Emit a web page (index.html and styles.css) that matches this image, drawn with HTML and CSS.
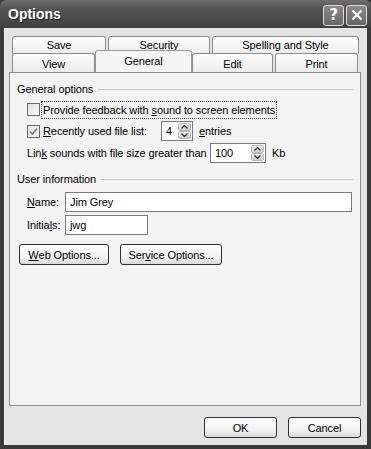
FILE: index.html
```html
<!DOCTYPE html>
<html lang="en">
<head>
	<meta charset="UTF-8">
	<title>Options</title>
	<link rel="stylesheet" href="styles.css">
</head>
<body>
	<div class="window">
		<div class="titlebar">
			<span class="title">Options</span>
			<div class="caption-btns">
				<span class="cap-btn">?</span>
				<span class="cap-btn">
					<svg width="12" height="12" viewBox="0 0 12 12"><path d="M1.5 1.5 L10.5 10.5 M10.5 1.5 L1.5 10.5" stroke="#fff" stroke-width="2.2"/></svg>
				</span>
			</div>
		</div>
		<div class="client">
			<div class="tabs tabs-back">
				<div class="tab w-save">Save</div>
				<div class="tab w-security">Security</div>
				<div class="tab w-spelling">Spelling and Style</div>
			</div>
			<div class="tabs tabs-front">
				<div class="tab w-view">View</div>
				<div class="tab tab-active w-general">General</div>
				<div class="tab w-edit">Edit</div>
				<div class="tab w-print">Print</div>
			</div>
			<div class="panel">
				<div class="group-head"><span>General options</span><i></i></div>
				<div class="row row-check1">
					<span class="check"></span>
					<span class="focus">Provide feedback with <u>s</u>ound to screen elements</span>
				</div>
				<div class="row row-check2">
					<span class="check checked">
						<svg width="9" height="9" viewBox="0 0 9 9"><path d="M1 4.5 L3.5 7 L8 1.5" fill="none" stroke="#777" stroke-width="1.6"/></svg>
					</span>
					<span class="lbl-recent"><u>R</u>ecently used file list:</span>
					<span class="spin spin-small"><span class="val">4</span><span class="arrows"><b><svg width="7" height="4" viewBox="0 0 7 4"><path d="M0.5 3.5 L3.5 0.5 L6.5 3.5" fill="none" stroke="#333" stroke-width="1.3"/></svg></b><b><svg width="7" height="4" viewBox="0 0 7 4"><path d="M0.5 0.5 L3.5 3.5 L6.5 0.5" fill="none" stroke="#333" stroke-width="1.3"/></svg></b></span></span>
					<span class="after"><u>e</u>ntries</span>
				</div>
				<div class="row row-link">
					<span class="lbl-link">Lin<u>k</u> sounds with file size greater than</span>
					<span class="spin spin-wide"><span class="val">100</span><span class="arrows"><b><svg width="7" height="4" viewBox="0 0 7 4"><path d="M0.5 3.5 L3.5 0.5 L6.5 3.5" fill="none" stroke="#333" stroke-width="1.3"/></svg></b><b><svg width="7" height="4" viewBox="0 0 7 4"><path d="M0.5 0.5 L3.5 3.5 L6.5 0.5" fill="none" stroke="#333" stroke-width="1.3"/></svg></b></span></span>
					<span class="after">Kb</span>
				</div>
				<div class="group-head head-user"><span>User information</span><i></i></div>
				<div class="row row-name">
					<span class="lbl"><u>N</u>ame:</span>
					<span class="field field-name">Jim Grey</span>
				</div>
				<div class="row row-init">
					<span class="lbl">Initia<u>l</u>s:</span>
					<span class="field field-init">jwg</span>
				</div>
				<div class="row row-btns">
					<span class="btn btn-web"><u>W</u>eb Options...</span>
					<span class="btn btn-service">Ser<u>v</u>ice Options...</span>
				</div>
			</div>
			<div class="footer">
				<span class="btn btn-ok">OK</span>
				<span class="btn btn-cancel">Cancel</span>
			</div>
		</div>
	</div>
</body>
</html>
```

FILE: styles.css
```css
*{padding:0;margin:0;box-sizing:border-box;}
body{
	background:#fff;
	font-family:"Liberation Sans",Arial,sans-serif;
	font-size:11px;
	letter-spacing:-0.1px;
	color:#000;
}
u{text-decoration:underline;text-underline-offset:1px;}

.window{
	width:371px;
	height:449px;
	background:#3a3a3a;
	display:flex;
	flex-direction:column;
}
.titlebar{
	height:28px;
	display:flex;
	align-items:center;
	justify-content:space-between;
	padding:0 4px 0 8px;
	background:linear-gradient(#6e6e6e,#555 30%,#4a4a4a 70%,#3e3e3e);
	border-radius:6px 6px 0 0;
}
.title{
	color:#fff;
	font-weight:bold;
	font-size:14px;
	letter-spacing:0;
	text-shadow:1px 1px 0 #222;
}
.caption-btns{display:flex;gap:2px;margin-top:2px;}
.cap-btn{
	width:21px;
	height:21px;
	border:1px solid #ddd;
	border-radius:3px;
	background:linear-gradient(#8a8a8a,#666);
	color:#fff;
	font-family:"DejaVu Sans",sans-serif;
	font-weight:bold;
	font-size:15px;
	display:flex;
	align-items:center;
	justify-content:center;
}

.client{
	flex:1;
	margin:0 4px 4px 4px;
	background:#e4e4e4;
	border-left:1px solid #f4f4f4;
	padding:8px 0 0 4px;
}
.tabs{display:flex;}
.tabs-back{margin-left:3px;gap:2px;height:17px;}
.tabs-front{margin-left:3px;height:19px;}
.tab{
	height:19px;
	border:1px solid #8c8c8c;
	border-bottom:none;
	border-radius:3px 3px 0 0;
	background:linear-gradient(#fdfdfd,#ececec);
	text-align:center;
	line-height:20px;
	white-space:nowrap;
}
.tabs-back .tab{height:18px;line-height:16px;}
.w-save{width:94px;}
.w-security{width:102px;}
.w-spelling{width:147px;}
.w-view{width:83px;}
.w-general{width:97px;}
.w-edit{width:81px;margin-right:2px;}
.w-print{width:83px;}
.tab-active{
	height:22px;
	margin-top:-3px;
	background:#f5f5f5;
	border-color:#999;
	position:relative;
	z-index:1;
	line-height:21px;
}

.panel{
	width:352px;
	height:334px;
	border:1px solid #8e8e8e;
	background:#f3f3f3;
	padding:9px 7px 0 7px;
}
.group-head{
	display:flex;
	align-items:center;
	height:14px;
	white-space:nowrap;
}
.group-head i{
	flex:1;
	height:1px;
	background:#c8c8c8;
	margin-left:5px;
}
.head-user{margin-top:9px;}

.row{
	display:flex;
	align-items:center;
	padding-left:10px;
	white-space:nowrap;
}
.row > *{flex-shrink:0;}
.row-check1{height:19px;margin-top:4px;}
.row-check2{height:20px;margin-top:2px;}
.row-link{height:20px;margin-top:2px;}
.row-name{height:20px;margin-top:6px;}
.row-init{height:20px;margin-top:3px;}
.row-btns{height:21px;margin-top:9px;padding-left:2px;gap:11px;}

.check{
	width:13px;
	height:13px;
	border:1px solid #6a6a6a;
	background:linear-gradient(135deg,#e0e0e0,#fafafa);
	display:flex;
	align-items:center;
	justify-content:center;
	margin-right:1px;
}
.focus{
	border:1px dotted #444;
	padding:0 1px;
	line-height:16px;
}
.lbl-recent{margin-left:2px;width:118px;}
.lbl-link{width:183px;}
.spin{
	height:20px;
	border:1px solid #7a7a7a;
	background:#fff;
	display:flex;
	align-items:center;
	padding:1px 1px 1px 4px;
}
.spin .val{flex:1;}
.spin-small{width:32px;}
.spin-wide{width:56px;}
.arrows{
	width:13px;
	height:16px;
	display:flex;
	flex-direction:column;
}
.arrows b{
	flex:1;
	display:flex;
	align-items:center;
	justify-content:center;
	background:linear-gradient(#f0f0f0,#cfcfcf);
	border:1px solid #b8b8b8;
	border-radius:2px;
}
.after{margin-left:6px;}

.lbl{width:38px;}
.field{
	height:20px;
	border:1px solid #7a7a7a;
	background:#fff;
	padding-left:4px;
	line-height:18px;
}
.field-name{width:287px;}
.field-init{width:83px;}

.btn{
	height:21px;
	border:1px solid #2f2f2f;
	border-radius:3px;
	background:linear-gradient(#fff,#f0f0f0 70%,#d8d8d8);
	display:flex;
	align-items:center;
	justify-content:center;
	white-space:nowrap;
}
.btn-web{width:90px;}
.btn-service{width:102px;}

.footer{
	display:flex;
	justify-content:flex-end;
	gap:11px;
	width:352px;
	margin-top:11px;
}
.btn-ok,.btn-cancel{width:73px;}
```
